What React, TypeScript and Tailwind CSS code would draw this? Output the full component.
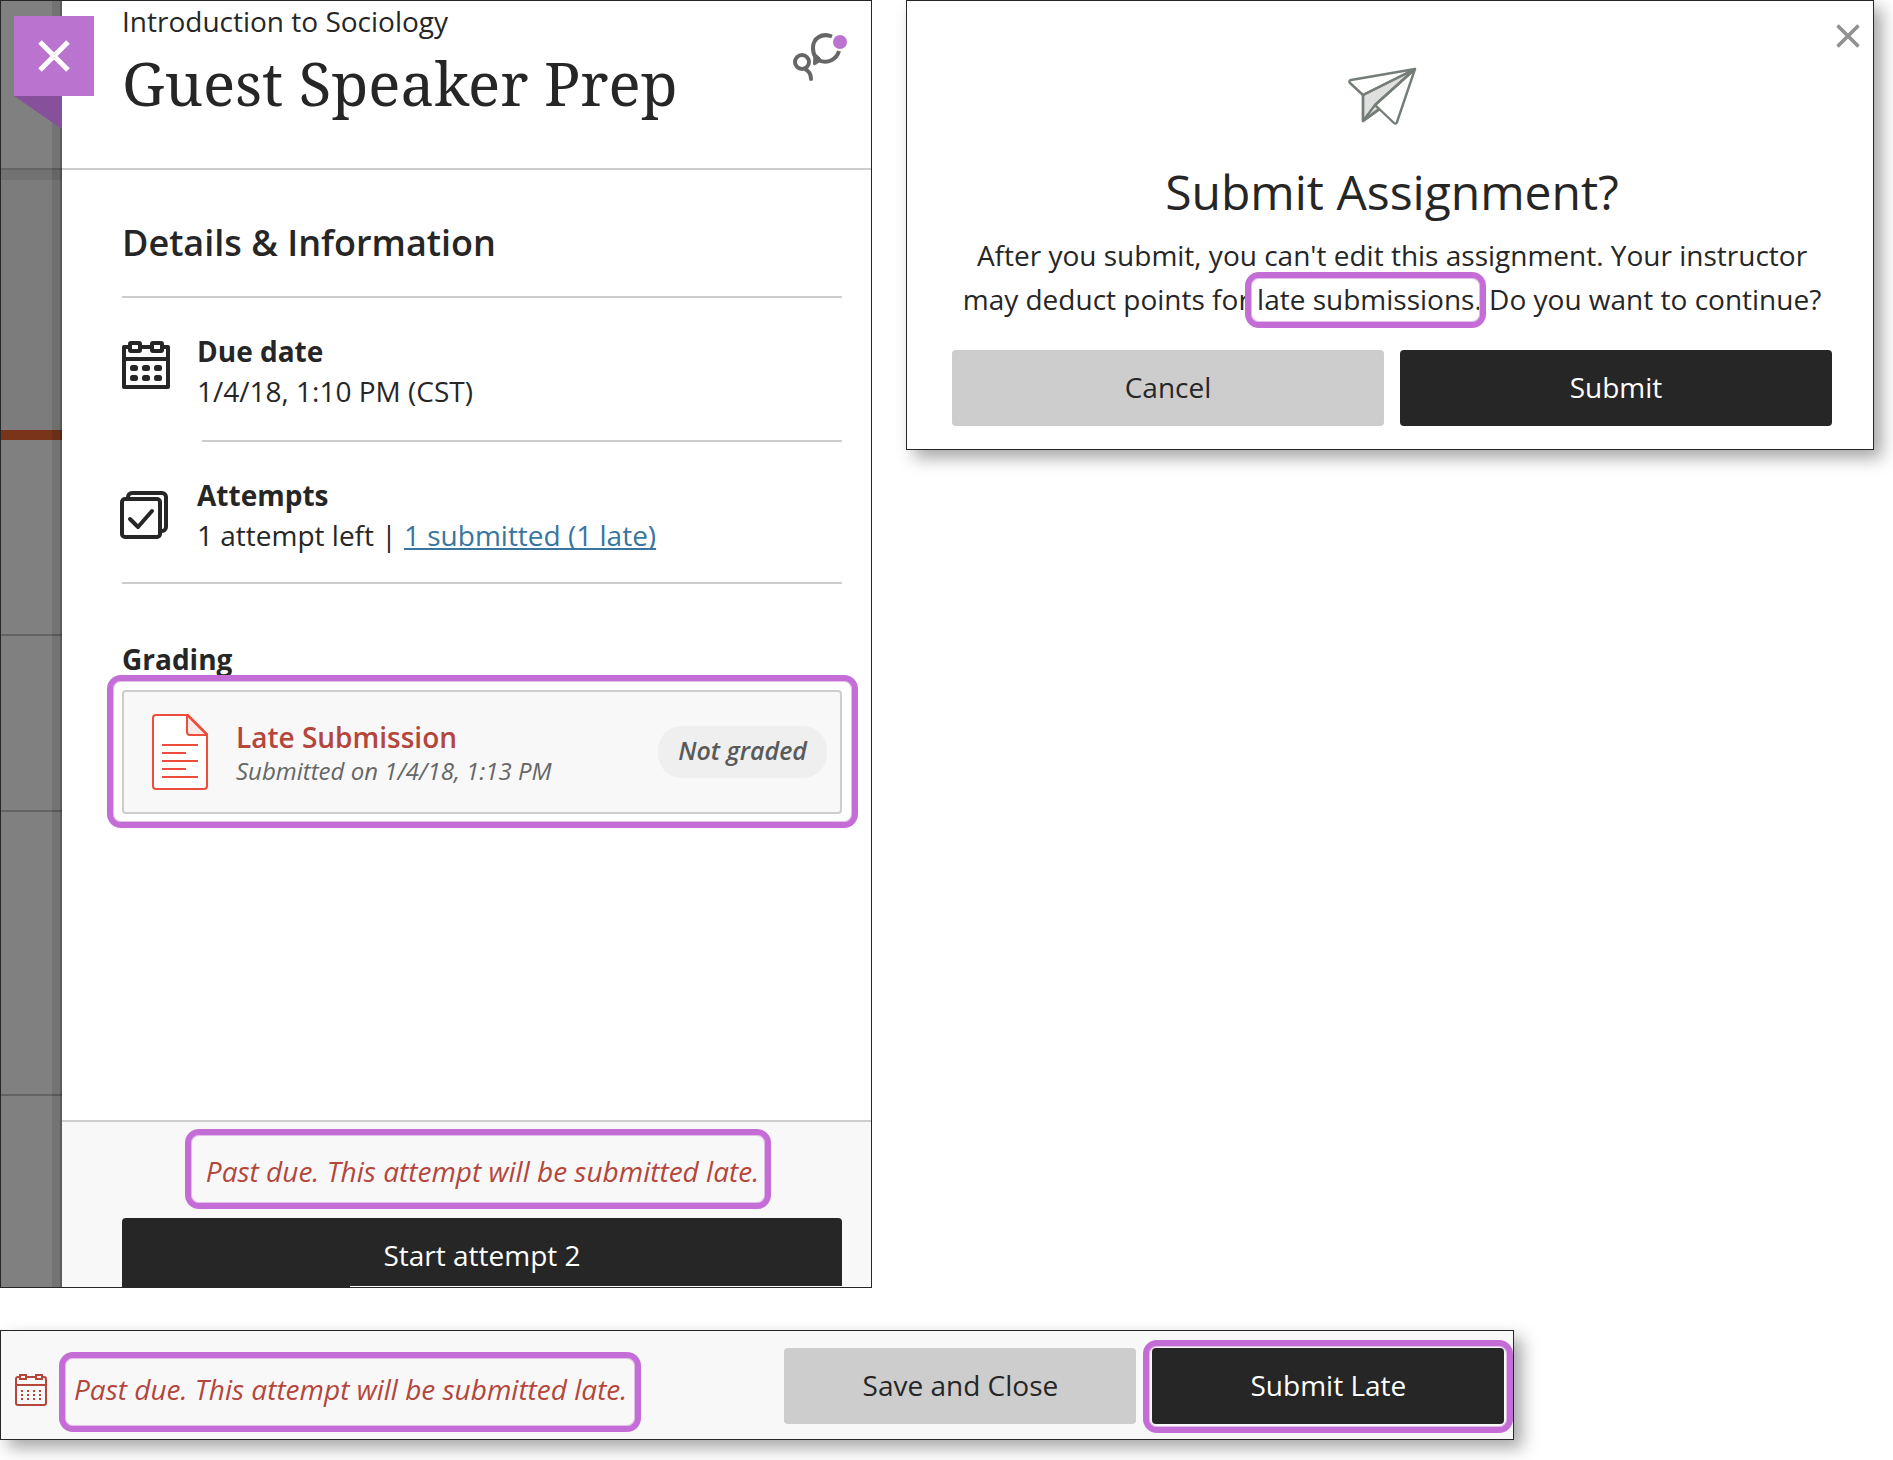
import { ReactNode } from "react";

function CloseIcon({ className }: { className?: string }) {
  return (
    <svg viewBox="0 0 32 32" fill="none" stroke="currentColor" strokeWidth="5" className={className}>
      <path d="M2 2 30 30M30 2 2 30" />
    </svg>
  );
}

function DiscussionIcon() {
  return (
    <svg viewBox="0 0 54 48" fill="none" stroke="#666" strokeWidth="4" strokeLinecap="round" className="h-12 w-[54px]">
      <circle cx="9" cy="29" r="7" />
      <path d="M12 36c4 2 6 5 6 10" />
      <path strokeLinecap="butt" d="M39 3.500C29-.5 20 5 20 15c0 4 1 7 2.500 9" />
      <path strokeLinecap="butt" d="M26 27.500c9 3.500 17.500-1 20-9.500" />
      <path strokeWidth="1" strokeLinejoin="round" fill="#666" d="M21 22.500 20.500 31c0 1 1 1 2 .5l5-3.500v-2.500l-3-3Z" />
      <circle cx="47" cy="9" r="7" fill="#ba74d0" stroke="none" />
    </svg>
  );
}

function CalendarIcon() {
  return (
    <svg viewBox="0 0 48 48" fill="none" stroke="#262626" strokeWidth="4" className="h-12 w-12 shrink-0">
      <path strokeLinejoin="round" d="M8 6H2v40h44V6h-6M18 6h12M2 18h44" />
      <rect x="8" y="2" width="10" height="8" rx="1" />
      <rect x="30" y="2" width="10" height="8" rx="1" />
      <g fill="#262626" stroke="none">
        <rect x="8" y="24" width="8" height="6" rx="2.500" />
        <rect x="20" y="24" width="8" height="6" rx="2.500" />
        <rect x="32" y="24" width="8" height="6" rx="2.500" />
        <rect x="8" y="34" width="8" height="6" rx="2.500" />
        <rect x="20" y="34" width="8" height="6" rx="2.500" />
        <rect x="32" y="34" width="8" height="6" rx="2.500" />
      </g>
    </svg>
  );
}

function SmallCalendarIcon() {
  return (
    <svg viewBox="0 0 32 32" fill="none" stroke="#b4463c" strokeWidth="2" className="h-8 w-8 shrink-0">
      <path d="M5 3H3a2 2 0 0 0-2 2v24a2 2 0 0 0 2 2h26a2 2 0 0 0 2-2V5a2 2 0 0 0-2-2h-2M11 3h10M1 11h30" />
      <rect x="5" y="1" width="6" height="4" />
      <rect x="21" y="1" width="6" height="4" />
      <path d="M6 17h21M6 21h21M6 25h21" strokeDasharray="2 4" />
    </svg>
  );
}

function AttemptsIcon() {
  return (
    <svg viewBox="2 0 48 48" fill="none" stroke="#262626" strokeWidth="4" strokeLinejoin="round" className="h-12 w-12 shrink-0 overflow-visible">
      <rect x="2" y="8" width="38" height="38" rx="3" />
      <path d="M8 8V6a4 4 0 0 1 4-4h30a4 4 0 0 1 4 4v30a4 4 0 0 1-4 4h-2" />
      <path strokeLinecap="round" d="m10 28 8 8 14-16" />
    </svg>
  );
}

function DocumentIcon() {
  return (
    <svg viewBox="0 0 56 76" fill="none" stroke="#ee4d3c" strokeWidth="2" strokeLinejoin="round" className="h-[76px] w-14 shrink-0">
      <path fill="#fff" d="M4 1h32l19 19v52a3 3 0 0 1-3 3H4a3 3 0 0 1-3-3V4a3 3 0 0 1 3-3Z" />
      <path fill="#f9e9e7" d="M35 1v17a3 3 0 0 0 3 3h17Z" />
      <path d="M10 31h36M10 39h24M10 47h36M10 55h24M10 63h36" />
    </svg>
  );
}

function PaperPlaneIcon() {
  return (
    <svg viewBox="0 0 70 60" fill="none" stroke="#757d77" strokeWidth="2.400" strokeLinejoin="round" className="h-[60px] w-[70px]">
      <path fill="#dfdfdf" d="M15 29 67 3 27 39l4 4-16 12Z" />
      <path d="M67 3 3 14c-2 .5-2 2-1 3l13 12L67 3 49 56c-.5 2-2 2-3 1L27 39" />
      <path d="M67 3 27 39 15 55V29M15 55l17-12" />
    </svg>
  );
}

function HighlightFrame({ className = "" }: { className?: string }) {
  return (
    <span
      className={`pointer-events-none absolute rounded-[14px] border-6 border-[#c46dd6] shadow-[inset_0_0_0_1px_#e2bdea] ${className}`}
    />
  );
}

function LateNotice({ className = "", children }: { className?: string; children: ReactNode }) {
  return (
    <p
      className={`rounded-[14px] border-6 border-[#c46dd6] text-[28px] leading-10 text-[#b4463c] italic shadow-[inset_0_0_0_1px_#e2bdea] ${className}`}
    >
      {children}
    </p>
  );
}

// Dimmed strip of the course page that stays visible behind the panel
function CourseRail() {
  return (
    <div className="relative flex w-[61px] shrink-0 flex-col bg-[#808080]">
      <div className="h-[167px]" />
      <div className="h-0.5 bg-[#646464]" />
      <div className="h-2.5 bg-[#727272]" />
      <div className="h-[250px] bg-[#7c7c7c]" />
      <div className="h-2.5 bg-[#7a341a]" />
      <div className="h-[194px]" />
      <div className="h-0.5 bg-[#646464]" />
      <div className="h-[174px]" />
      <div className="h-0.5 bg-[#646464]" />
      <div className="h-[282px]" />
      <div className="h-0.5 bg-[#646464]" />
      <div className="absolute inset-y-0 right-0 w-2.5 border-r-2 border-black/20 bg-black/10" />
      <button aria-label="Close panel" className="absolute top-[15px] left-[13px] flex h-20 w-20 items-center justify-center bg-[#ba74d0] text-white">
        <CloseIcon className="h-8 w-8" />
      </button>
      <svg viewBox="0 0 48 33" className="absolute top-[95px] right-0 h-[33px] w-12">
        <path fill="#86509a" d="M0 0h48v33Z" />
      </svg>
    </div>
  );
}

function AssignmentPanel() {
  return (
    <section className="flex min-h-[1288px] border border-[#262626] bg-white">
      <CourseRail />
      <div className="flex min-w-0 flex-1 flex-col">
        <header className="flex min-h-[169px] items-start justify-between border-b-2 border-[#cdcdcd] pt-0.5 pr-6 pl-[60px]">
          <div>
            <p className="text-[28px] leading-9">Introduction to Sociology</p>
            <h1 className="mt-2 font-['Noto_Serif','Droid_Serif','DejaVu_Serif_Condensed','DejaVu_Serif',serif] text-[60px] leading-[72px]">
              Guest Speaker Prep
            </h1>
          </div>
          <button aria-label="Class conversations" className="mt-[30px]">
            <DiscussionIcon />
          </button>
        </header>

        <div className="flex-1 pt-[49px] pr-[29px] pl-[60px]">
          <h2 className="border-b-2 border-[#cdcdcd] pb-[29px] text-[36px] leading-[48px] font-semibold">
            Details &amp; Information
          </h2>
          <div className="flex gap-[27px] pt-[33px] pb-[29px]">
            <div className="pt-2.5">
              <CalendarIcon />
            </div>
            <div className="text-[28px] leading-10">
              <h3 className="font-bold">Due date</h3>
              <p>1/4/18, 1:10 PM (CST)</p>
            </div>
          </div>
          <hr className="ml-20 border-t-2 border-[#cdcdcd]" />
          <div className="flex gap-[27px] border-b-2 border-[#cdcdcd] pt-[33px] pb-[27px]">
            <div className="pt-4">
              <AttemptsIcon />
            </div>
            <div className="text-[28px] leading-10">
              <h3 className="font-bold">Attempts</h3>
              <p>
                1 attempt left |{" "}
                <a href="#submitted" className="text-[#38759f] underline decoration-2 underline-offset-2 [text-decoration-skip-ink:none]">
                  1 submitted (1 late)
                </a>
              </p>
            </div>
          </div>

          <h3 className="pt-[55px] text-[28px] leading-10 font-bold">Grading</h3>
          <div className="relative mt-[11px]">
            <div className="flex h-[124px] items-center rounded border-2 border-[#cdcdcd] bg-[#f8f8f8] pr-[13px] pl-7">
              <DocumentIcon />
              <div className="ml-7 flex-1 pt-0.5">
                <p className="text-[28px] leading-9 font-semibold text-[#b4463c]">Late Submission</p>
                <p className="text-[24px] leading-8 text-[#666] italic">Submitted on 1/4/18, 1:13 PM</p>
              </div>
              <span className="rounded-3xl bg-[#efefef] px-5 pt-1.5 pb-2.5 text-[25px] leading-9 font-semibold text-[#5a5a5a] italic">
                Not graded
              </span>
            </div>
            <HighlightFrame className="-top-[15px] -right-4 -bottom-[14px] -left-[15px]" />
          </div>
        </div>

        <footer className="relative flex flex-col border-t-2 border-[#cdcdcd] bg-[#f8f8f8] pt-[7px] pr-[29px] pl-[60px]">
          <div className="mr-2 self-center">
            <LateNotice className="pt-4 pr-1.5 pb-3 pl-[15px]">Past due. This attempt will be submitted late.</LateNotice>
          </div>
          <button className="mt-[9px] h-[69px] rounded-t bg-[#262626] pt-1 text-[28px] leading-10 text-white">
            Start attempt 2
          </button>
          <div className="absolute right-0 bottom-0 left-[288px] h-px bg-white" />
        </footer>
      </div>
    </section>
  );
}

function SubmitDialog() {
  return (
    <section
      role="dialog"
      aria-labelledby="submit-title"
      className="relative flex flex-col border border-[#262626] bg-white pt-[65px] pr-[41px] pb-[23px] pl-[45px] text-center shadow-[8px_8px_16px_rgba(0,0,0,0.35)]"
    >
      <button aria-label="Close dialog" className="absolute top-[23px] right-[13px] text-[#919191]">
        <CloseIcon className="h-6 w-6" />
      </button>
      <div className="mr-[18px] self-center">
        <PaperPlaneIcon />
      </div>
      <h2 id="submit-title" className="mt-[34px] text-[48px] leading-[64px]">
        Submit Assignment?
      </h2>
      <p className="mt-[9px] text-[28px] leading-[44px]">
        After you submit, you can't edit this assignment. Your instructor may deduct points for{" "}
        <span className="relative whitespace-nowrap">
          late submissions.
          <HighlightFrame className="-top-2 -right-1 -bottom-2.5 -left-3" />
        </span>{" "}
        Do you want to continue?
      </p>
      <div className="mt-[29px] grid grid-cols-2 gap-4 text-[28px] leading-10">
        <button className="h-[76px] rounded bg-[#cdcdcd] pb-0.5">Cancel</button>
        <button className="h-[76px] rounded bg-[#262626] pb-0.5 text-white">Submit</button>
      </div>
    </section>
  );
}

function SubmitBar() {
  return (
    <section className="mt-[42px] flex w-4/5 items-end border border-[#262626] bg-[#f8f8f8] pr-[9px] pl-3.5 shadow-[8px_8px_16px_rgba(0,0,0,0.35)]">
      <div className="mr-3 pb-[33px]">
        <SmallCalendarIcon />
      </div>
      <div className="pb-[7px]">
        <LateNotice className="pt-[11px] pr-2 pb-[17px] pl-[9px]">Past due. This attempt will be submitted late.</LateNotice>
      </div>
      <div className="ml-auto flex gap-4 pt-[17px] pb-[15px] text-[28px] leading-10">
        <button className="h-[76px] w-[352px] rounded bg-[#cdcdcd] pb-0.5">Save and Close</button>
        <div className="relative">
          <button className="h-[76px] w-[352px] rounded bg-[#262626] pb-0.5 text-white">Submit Late</button>
          <HighlightFrame className="-inset-x-[9px] -top-2 -bottom-[9px]" />
        </div>
      </div>
    </section>
  );
}

export default function App() {
  return (
    <main className="min-h-screen bg-white pb-5 font-['Open_Sans',sans-serif] text-[#262626]">
      <div className="grid grid-cols-[872fr_968fr] items-start gap-[34px] pr-[19px]">
        <AssignmentPanel />
        <SubmitDialog />
      </div>
      <SubmitBar />
    </main>
  );
}
